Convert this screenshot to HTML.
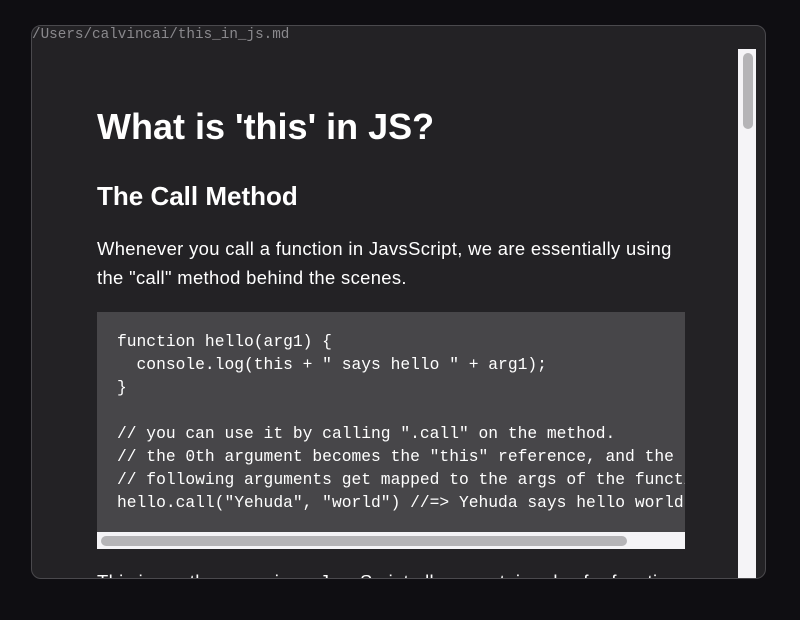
<!DOCTYPE html>
<html><head><style>
html,body{margin:0;padding:0;width:800px;height:620px;background:#0f0e12;overflow:hidden}
.win{position:absolute;left:31px;top:25px;width:733px;height:552px;background:#232225;border:1px solid #4a494d;border-radius:10px;overflow:hidden}
.path{position:absolute;left:0;top:1px;font:14.3px "Liberation Mono",monospace;color:#8a898d;white-space:nowrap}
.vtrack{position:absolute;left:706px;top:23px;width:18px;height:540px;background:#f5f4f7}
.vthumb{position:absolute;left:711px;top:27px;width:10px;height:76px;background:#b5b4b7;border-radius:5px}
.c{position:absolute;left:65px;top:0;width:588px;color:#fff;font-family:"Liberation Sans",sans-serif}
h1{position:absolute;top:80px;margin:0;font-size:36px;font-weight:bold;white-space:nowrap}
h2{position:absolute;top:155px;margin:0;font-size:26px;font-weight:bold;white-space:nowrap}
p{position:absolute;margin:0;font-size:18.4px;line-height:29px;width:600px;letter-spacing:0.35px}
.code{position:absolute;left:65px;top:286px;width:588px;height:237px;background:#474649;overflow:hidden}
pre{margin:0;position:absolute;left:20px;top:18px;font:16.3px "Liberation Mono",monospace;line-height:23px;color:#fff;white-space:pre}
.htrack{position:absolute;left:0;bottom:0;width:588px;height:17px;background:#f5f4f7}
.hthumb{position:absolute;left:4px;top:4px;width:526px;height:10px;background:#b5b4b7;border-radius:5px}
</style></head><body>
<div class="win">
<div class="path">/Users/calvincai/this_in_js.md</div>
<div class="c">
<h1>What is 'this' in JS?</h1>
<h2>The Call Method</h2>
<p style="top:208px">Whenever you call a function in JavsScript, we are essentially using<br>the "call" method behind the scenes.</p>
<p style="top:541px;white-space:nowrap">This is another mosaic as JavaScript allows certain rules for functions</p>
</div>
<div class="code"><pre>function hello(arg1) {
  console.log(this + " says hello " + arg1);
}

// you can use it by calling ".call" on the method.
// the 0th argument becomes the "this" reference, and the
// following arguments get mapped to the args of the function
hello.call("Yehuda", "world") //=&gt; Yehuda says hello world</pre>
<div class="htrack"><div class="hthumb"></div></div></div>
<div class="vtrack"></div><div class="vthumb"></div>
</div>
</body></html>
